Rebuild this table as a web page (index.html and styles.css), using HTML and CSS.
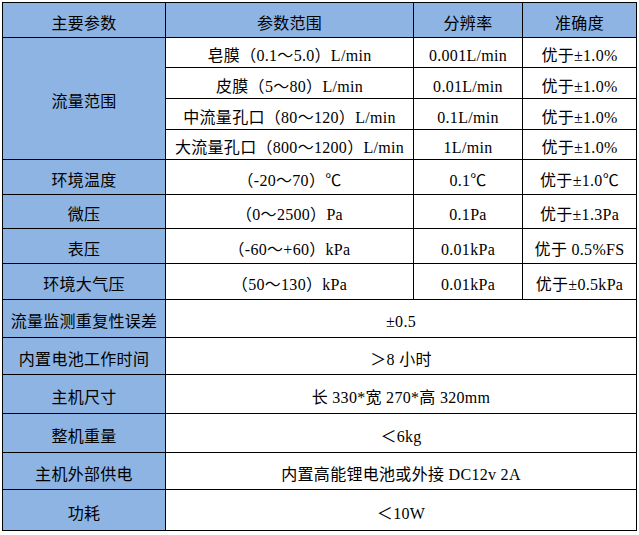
FILE: index.html
```html
<!DOCTYPE html>
<html lang="zh-CN">
<head>
<meta charset="utf-8">
<title>主要参数</title>
<link rel="stylesheet" href="styles.css">
</head>
<body>
<table class="spec">
  <colgroup>
    <col class="c1"><col class="c2"><col class="c3"><col class="c4">
  </colgroup>
  <tr class="h35 head">
    <td>主要参数</td><td>参数范围</td><td>分辨率</td><td>准确度</td>
  </tr>
  <tr class="h30">
    <td class="label" rowspan="4">流量范围</td>
    <td>皂膜（0.1～5.0）L/min</td><td>0.001L/min</td><td>优于±1.0%</td>
  </tr>
  <tr class="h31">
    <td>皮膜（5～80）L/min</td><td>0.01L/min</td><td>优于±1.0%</td>
  </tr>
  <tr class="h31">
    <td>中流量孔口（80～120）L/min</td><td>0.1L/min</td><td>优于±1.0%</td>
  </tr>
  <tr class="h30">
    <td>大流量孔口（800～1200）L/min</td><td>1L/min</td><td>优于±1.0%</td>
  </tr>
  <tr class="h35">
    <td class="label">环境温度</td><td>（-20～70）℃</td><td>0.1℃</td><td>优于±1.0℃</td>
  </tr>
  <tr class="h34">
    <td class="label">微压</td><td>（0～2500）Pa</td><td>0.1Pa</td><td>优于±1.3Pa</td>
  </tr>
  <tr class="h35">
    <td class="label">表压</td><td>（-60～+60）kPa</td><td>0.01kPa</td><td>优于 0.5%FS</td>
  </tr>
  <tr class="h36">
    <td class="label">环境大气压</td><td>（50～130）kPa</td><td>0.01kPa</td><td>优于±0.5kPa</td>
  </tr>
  <tr class="h38">
    <td class="label">流量监测重复性误差</td><td colspan="3">±0.5</td>
  </tr>
  <tr class="h37">
    <td class="label">内置电池工作时间</td><td colspan="3">＞8 小时</td>
  </tr>
  <tr class="h39">
    <td class="label">主机尺寸</td><td colspan="3">长 330*宽 270*高 320mm</td>
  </tr>
  <tr class="h39">
    <td class="label">整机重量</td><td colspan="3">＜6kg</td>
  </tr>
  <tr class="h37">
    <td class="label">主机外部供电</td><td colspan="3">内置高能锂电池或外接 DC12v 2A</td>
  </tr>
  <tr class="h41">
    <td class="label">功耗</td><td colspan="3">＜10W</td>
  </tr>
</table>
</body>
</html>
```
FILE: styles.css
```css
body {
  margin: 2px;
  background: #ffffff;
}

.spec {
  border-collapse: collapse;
  table-layout: fixed;
  width: 634px;
  font-family: "Liberation Serif", "Noto Sans CJK SC", serif;
  font-size: 16px;
  color: #000000;
  letter-spacing: 0.3px;
}

.c1 { width: 163px; }
.c2 { width: 248px; }
.c3 { width: 109px; }
.c4 { width: 114px; }

.spec td {
  border: 1px solid #000000;
  padding: 7px 0 0 0;
  line-height: 20px;
  text-align: center;
  vertical-align: middle;
  white-space: nowrap;
  background: #ffffff;
}

.spec .head td,
.spec td.label {
  background: #8db4e2;
}

.h30 { height: 30px; }
.h31 { height: 31px; }
.h34 { height: 34px; }
.h35 { height: 35px; }
.h36 { height: 36px; }
.h37 { height: 37px; }
.h38 { height: 38px; }
.h39 { height: 39px; }
.h41 { height: 41px; }
```
